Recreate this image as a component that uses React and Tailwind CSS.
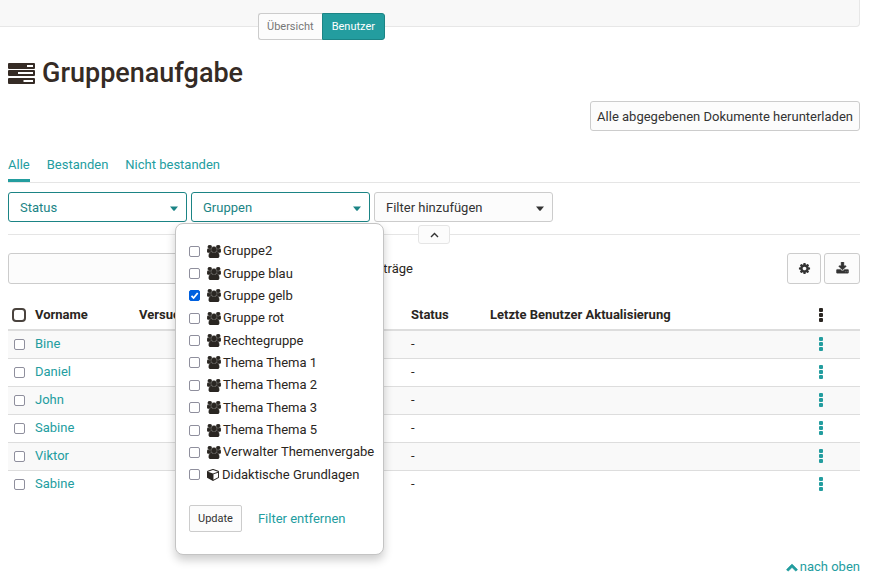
import React, { useState } from "react";

const PATHS = {
  users:
    "M593 896q-162 5-265 128h-134q-82 0-138-40.5t-56-118.5q0-353 124-353 6 0 43.5 21t97.5 42.5 119 21.5q67 0 133-23-5 37-5 66 0 139 81 256zm1071 637q0 120-73 189.5t-194 69.5h-874q-121 0-194-69.5t-73-189.5q0-53 3.5-103.5t14-109 26.5-108.5 43-97.5 62-81 85.5-53.5 111.5-20q10 0 43 21.5t73 48 107 48 135 21.5 135-21.5 107-48 73-48 43-21.5q61 0 111.5 20t85.5 53.5 62 81 43 97.5 26.5 108.5 14 109 3.5 103.5zm-1024-1277q0 106-75 181t-181 75-181-75-75-181 75-181 181-75 181 75 75 181zm704 384q0 159-112.5 271.5t-271.5 112.5-271.5-112.5-112.5-271.5 112.5-271.5 271.5-112.5 271.5 112.5 112.5 271.5zm576 225q0 78-56 118.5t-138 40.5h-134q-103-123-265-128 81-117 81-256 0-29-5-66 66 23 133 23 59 0 119-21.5t97.5-42.5 43.5-21q124 0 124 353zm-128-609q0 106-75 181t-181 75-181-75-75-181 75-181 181-75 181 75 75 181z",
  cube: "M896 1629l640-349v-636l-640 233v752zm-64-865l698-254-698-254-698 254zm832-252v768q0 35-18 65t-49 47l-704 384q-28 16-61 16t-61-16l-704-384q-31-17-49-47t-18-65v-768q0-40 23-73t61-47l704-256q22-8 44-8t44 8l704 256q38 14 61 47t23 73z",
  cog: "M1152 896q0-106-75-181t-181-75-181 75-75 181 75 181 181 75 181-75 75-181zm512-109v222q0 12-8 23t-20 13l-185 28q-19 54-39 91 35 50 107 138 10 12 10 25t-9 23q-27 37-99 108t-94 71q-12 0-26-9l-138-108q-44 23-91 38-16 136-29 186-7 28-36 28h-222q-14 0-24.5-8.5t-11.5-21.5l-28-184q-49-16-90-37l-141 107q-10 9-25 9-14 0-25-11-126-114-165-168-7-10-7-23 0-12 8-23 15-21 51-66.5t54-70.5q-27-50-41-99l-183-27q-13-2-21-12.5t-8-23.5v-222q0-12 8-23t19-13l186-28q14-46 39-92-40-57-107-138-10-12-10-24 0-10 9-23 26-36 98.5-107.5t94.5-71.5q13 0 26 10l138 107q44-23 91-38 16-136 29-186 7-28 36-28h222q14 0 24.5 8.5t11.5 21.5l28 184q49 16 90 37l142-107q9-9 24-9 13 0 25 10 129 119 165 170 7 8 7 22 0 12-8 23-15 21-51 66.5t-54 70.5q26 50 41 98l183 28q13 2 21 12.5t8 23.5z",
  download:
    "M1344 1344q0-26-19-45t-45-19-45 19-19 45 19 45 45 19 45-19 19-45zm256 0q0-26-19-45t-45-19-45 19-19 45 19 45 45 19 45-19 19-45zm128-224v320q0 40-28 68t-68 28h-1472q-40 0-68-28t-28-68v-320q0-40 28-68t68-28h465l135 136q58 56 136 56t136-56l136-136h464q40 0 68 28t28 68zm-325-569q17 41-14 70l-448 448q-18 19-45 19t-45-19l-448-448q-31-29-14-70 17-39 59-39h256v-448q0-26 19-45t45-19h256q26 0 45 19t19 45v448h256q42 0 59 39z",
  chevronUp:
    "M1683 1331l-166 165q-19 19-45 19t-45-19l-531-531-531 531q-19 19-45 19t-45-19l-166-165q-19-19-19-45.5t19-45.5l742-741q19-19 45-19t45 19l742 741q19 19 19 45.5t-19 45.5z",
};

function Icon({ name, box = "0 0 1792 1792", weight = 0, className }) {
  return (
    <svg viewBox={box} className={className} fill="currentColor" stroke="currentColor" strokeWidth={weight} aria-hidden="true">
      <path d={PATHS[name]} />
    </svg>
  );
}

function TasksIcon() {
  return (
    <svg viewBox="0 0 27 21" className="h-[21px] w-[27px]" fill="currentColor" fillRule="evenodd" aria-hidden="true">
      <path d="M1 0H26Q27 0 27 1V5Q27 6 26 6H1Q0 6 0 5V1Q0 0 1 0ZM19 2V4H25V2Z" />
      <path d="M1 7H26Q27 7 27 8V12Q27 13 26 13H1Q0 13 0 12V8Q0 7 1 7ZM10 9V11H25V9Z" />
      <path d="M1 15H26Q27 15 27 16V20Q27 21 26 21H1Q0 21 0 20V16Q0 15 1 15ZM15.500 17V19H25V17Z" />
    </svg>
  );
}

function Caret() {
  return (
    <svg viewBox="0 0 8 5" className="h-[5px] w-2" fill="currentColor" aria-hidden="true">
      <path d="M0 0.500H8L4.500 4.800H3.500Z" />
    </svg>
  );
}

function Dots() {
  return (
    <svg viewBox="0 0 4 14" className="h-[14px] w-1" fill="currentColor" aria-hidden="true">
      <rect width="4" height="4" rx="1" />
      <rect y="5" width="4" height="4" rx="1" />
      <rect y="10" width="4" height="4" rx="1" />
    </svg>
  );
}

const BOX =
  "block size-[11px] shrink-0 appearance-none rounded-[2px] border border-[#8f8f9d] bg-white";

function FilterButton({ label, active, open }) {
  return (
    <button
      type="button"
      aria-haspopup="true"
      aria-expanded={open ? true : false}
      className={
        active
          ? "flex h-[30px] w-[179px] items-center justify-between rounded-[3px] border border-[#1b8485] bg-white pt-[2px] pr-2 pl-[11px] text-[#1b8485]"
          : "flex h-[30px] w-[179px] items-center justify-between rounded-[3px] border border-[#ccc] bg-[#fcfcfc] pt-[2px] pr-2 pl-[11px] text-[#333]"
      }
    >
      {label}
      <Caret />
    </button>
  );
}

const GROUPS = [
  "Gruppe2",
  "Gruppe blau",
  "Gruppe gelb",
  "Gruppe rot",
  "Rechtegruppe",
  "Thema Thema 1",
  "Thema Thema 2",
  "Thema Thema 3",
  "Thema Thema 5",
  "Verwalter Themenvergabe",
  "Didaktische Grundlagen",
];

function GroupOption({ name, checked, onToggle }) {
  return (
    <label className="flex items-center text-[#2a2622]">
      <span className="relative mr-[7px] flex">
        <input
          type="checkbox"
          checked={checked}
          onChange={onToggle}
          className="block size-[11px] shrink-0 appearance-none rounded-[2px] border border-[#8f8f9d] bg-white checked:border-[#0060df] checked:bg-[#0060df]"
        />
        {checked && (
          <svg viewBox="0 0 11 11" className="pointer-events-none absolute inset-0 size-[11px]" fill="none" stroke="#fff" strokeWidth="1.800" aria-hidden="true">
            <path d="M2.500 5.800L4.600 8L8.700 3" />
          </svg>
        )}
      </span>
      {name === "Didaktische Grundlagen" ? (
        <Icon name="cube" box="0 0 1664 1792" className="mr-[3px] h-[13px] w-3" />
      ) : (
        <Icon name="users" box="0 0 1920 1792" weight={90} className="mr-[2px] h-[13px] w-[14px]" />
      )}
      {name}
    </label>
  );
}

function GroupMenu() {
  const [selected, setSelected] = useState(["Gruppe gelb"]);
  const toggle = (name) =>
    setSelected((s) => (s.includes(name) ? s.filter((n) => n !== name) : [...s, name]));
  return (
    <div className="absolute top-[31px] -left-4 z-10 w-[209px] rounded-lg border border-[#c4c4c4] bg-white px-[13px] pt-4 pb-[22px] shadow-[0_5px_10px_rgba(0,0,0,0.2)]">
      <div className="grid h-[246px] auto-rows-fr whitespace-nowrap">
        {GROUPS.map((g) => (
          <GroupOption key={g} name={g} checked={selected.includes(g)} onToggle={() => toggle(g)} />
        ))}
      </div>
      <div className="mt-[19px] flex items-center gap-4">
        <button type="button" className="h-[27px] rounded-[2px] border border-[#ccc] bg-[#fcfcfc] px-2 text-[11px] text-[#333]">
          Update
        </button>
        <a href="#clear" className="text-[#239d9f]">
          Filter entfernen
        </a>
      </div>
    </div>
  );
}

const PEOPLE = ["Bine", "Daniel", "John", "Sabine", "Viktor", "Sabine"];

export default function App() {
  return (
    <div className="bg-white pr-[9px] font-['Roboto','Liberation_Sans',sans-serif] text-[13px] leading-5 text-[#2a2622]">
      <header className="h-[27px] rounded-br-[4px] border-r border-b border-[#e7e7e7] bg-[#f8f8f8] pt-[13px] pl-[258px]">
        <nav className="flex text-[11px]">
          <button type="button" className="h-[27px] rounded-l-[3px] border border-r-0 border-[#ccc] bg-[#fcfcfc] px-2 text-[#777]">
            Übersicht
          </button>
          <button type="button" className="h-[27px] rounded-r-[3px] border border-[#1b8485] bg-[#239d9f] px-[9px] text-white">
            Benutzer
          </button>
        </nav>
      </header>

      <main className="pl-2">
        <h1 className="mt-[31px] flex items-center gap-[7px] text-[27px] leading-[30px] font-medium text-[#352b25]">
          <TasksIcon />
          Gruppenaufgabe
        </h1>
        <div className="mt-[13px] flex justify-end">
          <button type="button" className="h-[30px] rounded-[3px] border border-[#ccc] bg-[#fcfcfc] px-[6px] pt-[2px] text-[#333]">
            Alle abgegebenen Dokumente herunterladen
          </button>
        </div>

        <nav className="mt-6 flex gap-[17px] border-b border-[#e5e5e5] text-[#239d9f]">
          <a href="#all" className="h-[27px] border-b-[3px] border-[#239d9f]">Alle</a>
          <a href="#passed">Bestanden</a>
          <a href="#failed">Nicht bestanden</a>
        </nav>

        <div className="mt-[9px] flex gap-1">
          <FilterButton label="Status" active />
          <div className="relative">
            <FilterButton label="Gruppen" active open />
            <GroupMenu />
          </div>
          <FilterButton label="Filter hinzufügen" />
        </div>
        <div className="mt-[3px] flex items-center">
          <span className="h-px flex-1 bg-[#e5e5e5]" />
          <button type="button" aria-label="Filter einklappen" className="flex h-[19px] w-8 items-center justify-center rounded-[3px] border border-[#e5e5e5] bg-[#fcfcfc] text-[#333]">
            <svg viewBox="0 0 9 6" className="h-[6px] w-[9px]" fill="none" stroke="currentColor" strokeWidth="1.400" aria-hidden="true">
              <path d="M1 5L4.500 1.500L8 5" />
            </svg>
          </button>
          <span className="h-px flex-1 bg-[#e5e5e5]" />
        </div>

        <div className="mt-[9px] flex items-center">
          <input type="text" aria-label="Suche" className="h-[31px] w-[300px] rounded-[3px] border border-[#ccc] bg-[#fcfcfc] px-2" />
          <span className="w-[105px] text-right">6 Einträge</span>
          <div className="ml-auto flex gap-[3px] text-[#333]">
            <button type="button" aria-label="Einstellungen" className="flex h-[31px] w-[34px] items-center justify-center rounded-[3px] border border-[#ccc] bg-[#fcfcfc]">
              <Icon name="cog" className="size-[13px]" />
            </button>
            <button type="button" aria-label="Herunterladen" className="flex h-[31px] w-9 items-center justify-center rounded-[3px] border border-[#ccc] bg-[#fcfcfc]">
              <Icon name="download" weight={60} className="size-[13px]" />
            </button>
          </div>
        </div>

        <table className="mt-[17px] w-full table-fixed border-collapse text-left">
          <colgroup>
            <col className="w-[27px]" />
            <col className="w-[104px]" />
            <col className="w-[272px]" />
            <col className="w-[79px]" />
            <col />
            <col className="w-[50px]" />
          </colgroup>
          <thead>
            <tr className="h-[29px] border-b-2 border-[#ddd]">
              <th className="pl-1">
                <input type="checkbox" aria-label="Alle auswählen" className="block size-[14px] appearance-none rounded-[4px] border-2 border-[#4a433e] bg-white" />
              </th>
              <th className="font-bold">Vorname</th>
              <th className="font-bold">Versuche</th>
              <th className="font-bold">Status</th>
              <th className="font-bold">Letzte Benutzer Aktualisierung</th>
              <th>
                <button type="button" aria-label="Aktionen" className="ml-[9px] block"><Dots /></button>
              </th>
            </tr>
          </thead>
          <tbody>
            {PEOPLE.map((name, i) => (
              <tr key={i} className="h-7 border-b border-[#ddd] last:border-b-0 odd:bg-[#f9f9f9]">
                <td className="pl-[6px]">
                  <input type="checkbox" aria-label={name} className={BOX} />
                </td>
                <td><a href="#user" className="text-[#239d9f]">{name}</a></td>
                <td />
                <td>-</td>
                <td />
                <td className="text-[#239d9f]">
                  <button type="button" aria-label="Aktionen" className="ml-[9px] block"><Dots /></button>
                </td>
              </tr>
            ))}
          </tbody>
        </table>

        <footer className="mt-[59px] flex justify-end">
          <a href="#top" className="flex items-center gap-[2px] text-[#239d9f]">
            <Icon name="chevronUp" weight={80} className="size-3" />
            nach oben
          </a>
        </footer>
      </main>
    </div>
  );
}
